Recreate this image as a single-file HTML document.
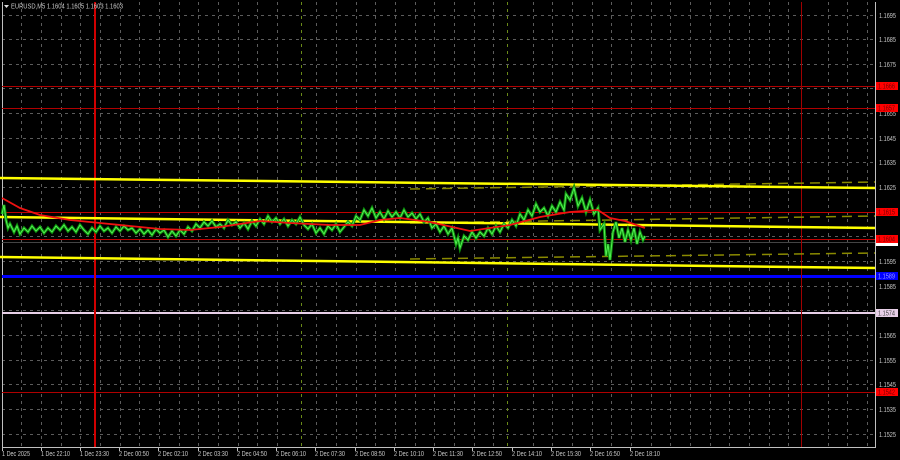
<!DOCTYPE html>
<html><head><meta charset="utf-8"><style>
html,body{margin:0;padding:0;background:#000;width:900px;height:460px;overflow:hidden}
svg{display:block}
text{font-family:"Liberation Sans",sans-serif;font-size:7px;fill:#c8c8c8}
</style></head><body>
<svg width="900" height="460" viewBox="0 0 900 460" xmlns="http://www.w3.org/2000/svg">
<rect width="900" height="460" fill="#000"/>
<g stroke="#5c5c5c" stroke-width="1" stroke-dasharray="3,4">
<path d="M2 15.5H875M2 39.5H875M2 64.5H875M2 88.5H875M2 113.5H875M2 138.5H875M2 162.5H875M2 187.5H875M2 212.5H875M2 236.5H875M2 261.5H875M2 286.5H875M2 310.5H875M2 335.5H875M2 360.5H875M2 384.5H875M2 409.5H875M2 434.5H875"/>
<path d="M21.5 2V447M41.5 2V447M61.5 2V447M80.5 2V447M100.5 2V447M120.5 2V447M139.5 2V447M159.5 2V447M179.5 2V447M198.5 2V447M218.5 2V447M238.5 2V447M257.5 2V447M277.5 2V447M316.5 2V447M336.5 2V447M356.5 2V447M375.5 2V447M395.5 2V447M415.5 2V447M434.5 2V447M454.5 2V447M474.5 2V447M493.5 2V447M533.5 2V447M552.5 2V447M572.5 2V447M592.5 2V447M611.5 2V447M631.5 2V447M651.5 2V447M670.5 2V447M690.5 2V447M710.5 2V447M729.5 2V447M749.5 2V447M769.5 2V447M788.5 2V447M828.5 2V447M847.5 2V447M867.5 2V447"/>
</g>
<g stroke="#6a8a18" stroke-width="1" stroke-dasharray="3,4"><path d="M301.5 2V447M507.5 2V447"/></g>
<path d="M2.5 2V447.5H875.5V2" fill="none" stroke="#c0c0c0" stroke-width="1"/>
<path d="M2 86.5H875M2 108.5H875M2 392.5H875" stroke="#b00000" stroke-width="1"/>
<path d="M2 212.5H875M2 239.5H875" stroke="#c00000" stroke-width="1"/>
<path d="M2 242.5H875" stroke="#444" stroke-width="1"/>
<rect x="2" y="275" width="873" height="3" fill="#0000ff"/>
<rect x="2" y="312" width="873" height="2" fill="#e8d0e8"/>
<rect x="94" y="2" width="2" height="445" fill="#d00000"/>
<rect x="801" y="2" width="1" height="445" fill="#a00000"/>
<g stroke="#8a8a00" stroke-width="1.5" stroke-dasharray="10,6"><path d="M410 189L875 182M410 223L875 216M410 259L875 253"/></g>
<g stroke="#ffff00" stroke-width="2.5" fill="none">
<path d="M0 178L875 188"/>
<path d="M0 217L875 228"/>
<path d="M0 257L875 268"/>
</g>
<g fill="none" stroke-linejoin="miter">
<polyline stroke="#0c8f0c" stroke-width="3" points="2,214 4,205 6,220 8,228 10,224 14,232 17,226 20,234 24,228 28,232 32,226 36,231 40,227 44,233 48,228 52,232 56,226 60,230 64,225 68,231 72,227 76,232 80,225 84,230 88,234 92,228 96,232 100,226 104,231 108,228 112,233 116,227 120,231 124,226 128,230 132,228 136,233 140,229 144,234 148,230 152,235 156,229 160,233 164,230 168,237 172,231 176,236 180,230 184,234 188,227 192,231 196,224 200,228 204,222 208,226 212,221 216,227 220,224 224,228 228,220 232,225 236,222 240,228 244,223 248,229 252,221 256,226 260,219 264,224 268,216 272,222 276,218 280,224 284,219 288,226 292,220 296,224 300,217 304,225 308,229 312,224 316,233 320,228 324,234 328,226 332,230 336,224 340,232 344,227 348,222 352,226 356,216 360,220 364,210 368,216 372,208 376,218 380,212 384,219 388,211 392,217 396,212 400,218 404,210 408,217 412,213 416,219 420,214 424,222 428,218 432,228 436,224 440,232 444,226 448,234 452,228 456,244 458,238 460,248 464,236 468,240 472,232 476,238 480,232 484,236 488,228 492,234 496,226 500,232 504,224 508,228 512,220 516,226 520,214 524,220 528,210 532,216 536,204 540,212 544,208 548,216 552,206 556,212 560,202 564,210 566,194 570,200 574,188 578,206 582,198 586,212 590,200 594,214 598,208 600,230 604,224 606,256 608,244 610,260 613,232 616,222 619,238 622,228 625,242 628,230 631,240 634,228 637,244 640,232 643,240 645,236"/>
<polyline stroke="#55ee55" stroke-width="1" points="2,214 4,205 6,220 8,228 10,224 14,232 17,226 20,234 24,228 28,232 32,226 36,231 40,227 44,233 48,228 52,232 56,226 60,230 64,225 68,231 72,227 76,232 80,225 84,230 88,234 92,228 96,232 100,226 104,231 108,228 112,233 116,227 120,231 124,226 128,230 132,228 136,233 140,229 144,234 148,230 152,235 156,229 160,233 164,230 168,237 172,231 176,236 180,230 184,234 188,227 192,231 196,224 200,228 204,222 208,226 212,221 216,227 220,224 224,228 228,220 232,225 236,222 240,228 244,223 248,229 252,221 256,226 260,219 264,224 268,216 272,222 276,218 280,224 284,219 288,226 292,220 296,224 300,217 304,225 308,229 312,224 316,233 320,228 324,234 328,226 332,230 336,224 340,232 344,227 348,222 352,226 356,216 360,220 364,210 368,216 372,208 376,218 380,212 384,219 388,211 392,217 396,212 400,218 404,210 408,217 412,213 416,219 420,214 424,222 428,218 432,228 436,224 440,232 444,226 448,234 452,228 456,244 458,238 460,248 464,236 468,240 472,232 476,238 480,232 484,236 488,228 492,234 496,226 500,232 504,224 508,228 512,220 516,226 520,214 524,220 528,210 532,216 536,204 540,212 544,208 548,216 552,206 556,212 560,202 564,210 566,194 570,200 574,188 578,206 582,198 586,212 590,200 594,214 598,208 600,230 604,224 606,256 608,244 610,260 613,232 616,222 619,238 622,228 625,242 628,230 631,240 634,228 637,244 640,232 643,240 645,236"/>
<polyline stroke="#ee1111" stroke-width="1.8" points="2,198 20,208 40,215 70,220 100,223 130,226 160,229 190,230 220,227 260,221 290,223 330,225 360,225 380,220 400,218 430,222 470,231 510,225 540,217 570,212 598,210 610,218 625,221 645,228"/>
</g>
<path d="M4 5H9L6.5 8Z" fill="#ddd"/>
<text x="11" y="8.5" textLength="112" lengthAdjust="spacingAndGlyphs">EURUSD,M5  1.1604 1.1605 1.1603 1.1603</text>
<g>
<text x="879" y="18" textLength="17" lengthAdjust="spacingAndGlyphs">1.1695</text><text x="879" y="42" textLength="17" lengthAdjust="spacingAndGlyphs">1.1685</text><text x="879" y="67" textLength="17" lengthAdjust="spacingAndGlyphs">1.1675</text>
<text x="879" y="116" textLength="17" lengthAdjust="spacingAndGlyphs">1.1655</text><text x="879" y="141" textLength="17" lengthAdjust="spacingAndGlyphs">1.1645</text><text x="879" y="165" textLength="17" lengthAdjust="spacingAndGlyphs">1.1635</text>
<text x="879" y="190" textLength="17" lengthAdjust="spacingAndGlyphs">1.1625</text><text x="879" y="264" textLength="17" lengthAdjust="spacingAndGlyphs">1.1595</text><text x="879" y="289" textLength="17" lengthAdjust="spacingAndGlyphs">1.1585</text>
<text x="879" y="338" textLength="17" lengthAdjust="spacingAndGlyphs">1.1565</text><text x="879" y="363" textLength="17" lengthAdjust="spacingAndGlyphs">1.1555</text><text x="879" y="387" textLength="17" lengthAdjust="spacingAndGlyphs">1.1545</text>
<text x="879" y="412" textLength="17" lengthAdjust="spacingAndGlyphs">1.1535</text><text x="879" y="437" textLength="17" lengthAdjust="spacingAndGlyphs">1.1525</text>
</g>
<g>
<rect x="876" y="82" width="22" height="8" fill="#ff0000"/><text x="878" y="88.5" textLength="17" lengthAdjust="spacingAndGlyphs" style="fill:#700">1.1666</text>
<rect x="876" y="104" width="22" height="8" fill="#ff0000"/><text x="878" y="110.5" textLength="17" lengthAdjust="spacingAndGlyphs" style="fill:#700">1.1657</text>
<rect x="876" y="208" width="22" height="8" fill="#ff0000"/><text x="878" y="214.5" textLength="17" lengthAdjust="spacingAndGlyphs" style="fill:#700">1.1615</text>
<rect x="876" y="243" width="22" height="3" fill="#fff"/>
<rect x="876" y="235" width="22" height="8" fill="#ff0000"/><text x="878" y="241.5" textLength="17" lengthAdjust="spacingAndGlyphs" style="fill:#700">1.1604</text>
<rect x="876" y="272" width="22" height="8" fill="#0000ff"/><text x="878" y="278.5" textLength="17" lengthAdjust="spacingAndGlyphs" style="fill:#99f">1.1589</text>
<rect x="876" y="309" width="22" height="8" fill="#e8d0e8"/><text x="878" y="315.5" textLength="17" lengthAdjust="spacingAndGlyphs" style="fill:#444">1.1574</text>
<rect x="876" y="388" width="22" height="8" fill="#ff0000"/><text x="878" y="394.5" textLength="17" lengthAdjust="spacingAndGlyphs" style="fill:#700">1.1542</text>
</g>
<g>
<text x="2" y="456" textLength="28" lengthAdjust="spacingAndGlyphs">1 Dec 2025</text><text x="41" y="456" textLength="29" lengthAdjust="spacingAndGlyphs">1 Dec 22:10</text><text x="80" y="456" textLength="29" lengthAdjust="spacingAndGlyphs">1 Dec 23:30</text>
<text x="119" y="456" textLength="30" lengthAdjust="spacingAndGlyphs">2 Dec 00:50</text><text x="158" y="456" textLength="30" lengthAdjust="spacingAndGlyphs">2 Dec 02:10</text><text x="198" y="456" textLength="30" lengthAdjust="spacingAndGlyphs">2 Dec 03:30</text>
<text x="237" y="456" textLength="30" lengthAdjust="spacingAndGlyphs">2 Dec 04:50</text><text x="276" y="456" textLength="30" lengthAdjust="spacingAndGlyphs">2 Dec 06:10</text><text x="315" y="456" textLength="30" lengthAdjust="spacingAndGlyphs">2 Dec 07:30</text>
<text x="355" y="456" textLength="30" lengthAdjust="spacingAndGlyphs">2 Dec 08:50</text><text x="394" y="456" textLength="30" lengthAdjust="spacingAndGlyphs">2 Dec 10:10</text><text x="433" y="456" textLength="30" lengthAdjust="spacingAndGlyphs">2 Dec 11:30</text>
<text x="472" y="456" textLength="30" lengthAdjust="spacingAndGlyphs">2 Dec 12:50</text><text x="512" y="456" textLength="30" lengthAdjust="spacingAndGlyphs">2 Dec 14:10</text><text x="551" y="456" textLength="30" lengthAdjust="spacingAndGlyphs">2 Dec 15:30</text>
<text x="590" y="456" textLength="30" lengthAdjust="spacingAndGlyphs">2 Dec 16:50</text><text x="630" y="456" textLength="30" lengthAdjust="spacingAndGlyphs">2 Dec 18:10</text>
</g>
<g stroke="#c0c0c0"><path d="M2.5 447V451M41.5 447V451M80.5 447V451M119.5 447V451M158.5 447V451M198.5 447V451M237.5 447V451M276.5 447V451M315.5 447V451M355.5 447V451M394.5 447V451M433.5 447V451M472.5 447V451M512.5 447V451M551.5 447V451M590.5 447V451M630.5 447V451"/></g>
</svg>
</body></html>
